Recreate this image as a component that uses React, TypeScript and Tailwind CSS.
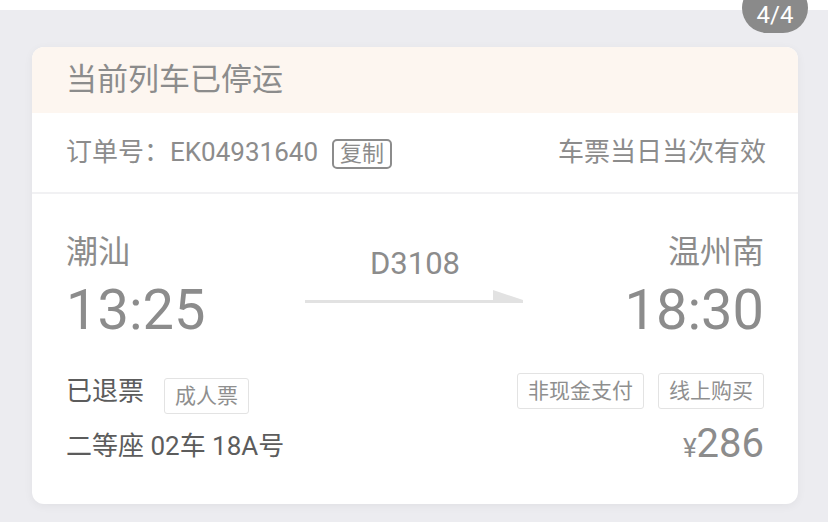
import React from "react";

const font = { fontFamily: '"Roboto", "Noto Sans CJK SC", sans-serif' };

function Tag({ children }: { children: React.ReactNode }) {
  return (
    <span className="inline-flex items-center h-[36px] px-[10px] border-[1.5px] border-[#e3e3e3] rounded-[3px] text-[21px] leading-none text-[#8f8f8f]">
      {children}
    </span>
  );
}

export default function App() {
  return (
    <div
      className="relative h-[522px] w-[828px] overflow-hidden bg-[#ececf0]"
      style={font}
    >
      <div className="h-[10px] bg-white" />

      {/* page counter badge */}
      <div className="absolute right-[20px] top-[-17px] flex h-[50px] w-[66px] items-end justify-center rounded-full bg-[#8a8a8a] pb-[6px] text-[24px] leading-none text-white">
        4/4
      </div>

      <div className="ml-[32px] mr-[30px] mt-[37px] overflow-hidden rounded-[12px] bg-white shadow-[0_2px_10px_rgba(0,0,0,0.05)]">
        <div className="flex h-[66px] items-center bg-[#fdf6f0] px-[34px] text-[31px] text-[#8c8c8c]">
          当前列车已停运
        </div>

        <div className="flex h-[81px] items-center justify-between border-b-2 border-[#f1f1f3] px-[34px] text-[26px] text-[#8c8c8c]">
          <div className="flex items-center">
            <span>订单号：EK04931640</span>
            <span className="ml-[14px] mt-[2px] inline-flex h-[30px] items-center rounded-[5px] border-2 border-[#8c8c8c] px-[6px] text-[22px] leading-none">
              复制
            </span>
          </div>
          <span className="mr-[-2px]">车票当日当次有效</span>
        </div>

        <div className="px-[34px] pb-[40px] pt-[38px]">
          <div className="flex items-start justify-between">
            <div className="text-[#8c8c8c]">
              <div className="text-[32px] leading-[40px]">潮汕</div>
              <div className="mt-[10px] text-[56px] leading-[56px]">13:25</div>
            </div>
            <div className="flex flex-col items-center pt-[17px]">
              <div className="text-[31px] leading-[30px] text-[#8c8c8c]">D3108</div>
              <svg width="220" height="14" viewBox="0 0 220 14" className="mt-[11px]">
                <rect x="0" y="10" width="218" height="3" fill="#e2e2e2" />
                <polygon points="188,0 218,10 218,13 188,13" fill="#e2e2e2" />
              </svg>
            </div>
            <div className="flex flex-col items-end text-[#8c8c8c]">
              <div className="text-[32px] leading-[40px]">温州南</div>
              <div className="mt-[10px] text-[56px] leading-[56px]">18:30</div>
            </div>
          </div>

          <div className="mt-[30px] flex items-center justify-between">
            <div className="flex items-center">
              <span className="text-[26px] text-[#5c5c5c]">已退票</span>
              <span className="ml-[20px] mt-[10px]">
                <Tag>成人票</Tag>
              </span>
            </div>
            <div className="flex items-center gap-[14px]">
              <Tag>非现金支付</Tag>
              <Tag>线上购买</Tag>
            </div>
          </div>

          <div className="mt-[10px] flex items-end justify-between">
            <span className="text-[26px] leading-[36px] text-[#5c5c5c]">二等座 02车 18A号</span>
            <span className="leading-none text-[#8c8c8c]">
              <span className="text-[26px]">¥</span>
              <span className="text-[40px]">286</span>
            </span>
          </div>
        </div>
      </div>
    </div>
  );
}
